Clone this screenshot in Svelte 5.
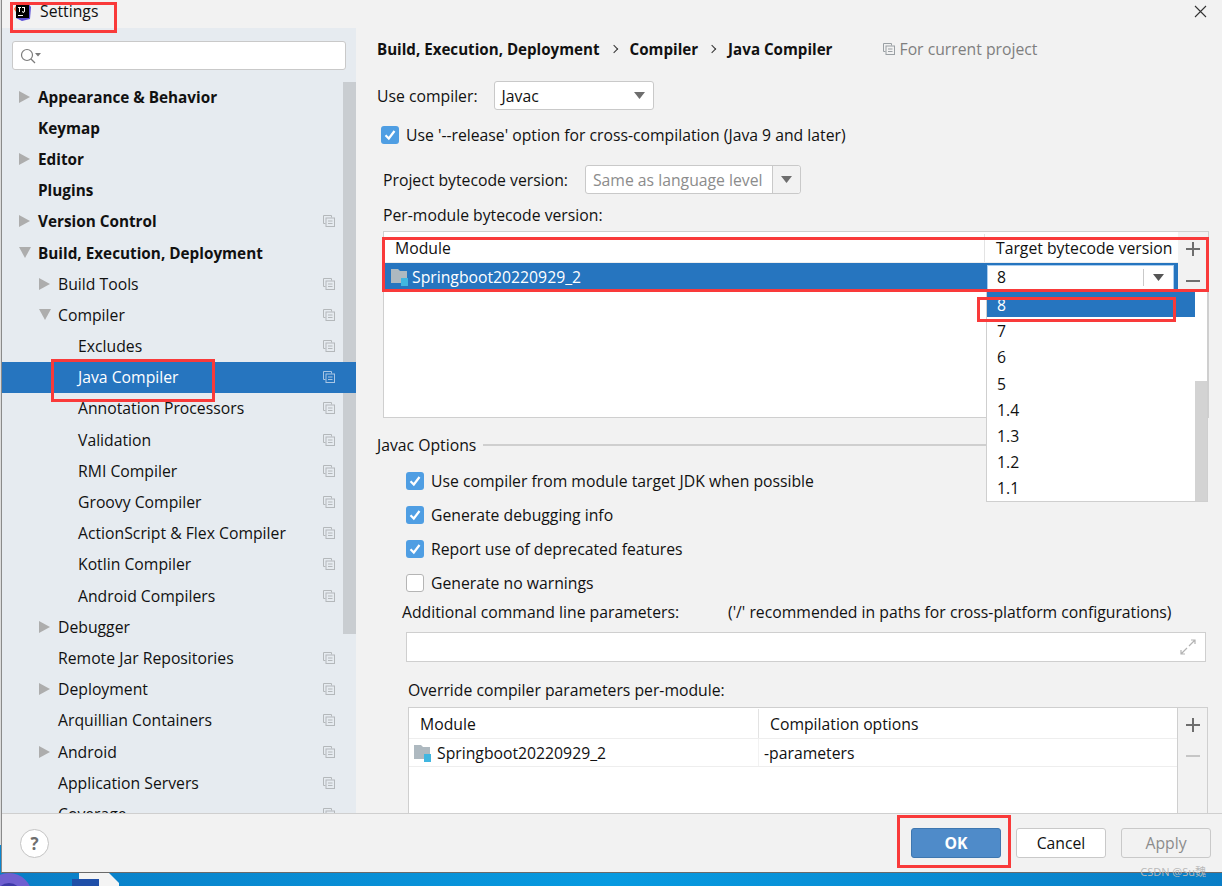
<script>
  const nav = [
    { label: "Appearance & Behavior", level: 0, bold: true, arrow: "right" },
    { label: "Keymap", level: 0, bold: true },
    { label: "Editor", level: 0, bold: true, arrow: "right" },
    { label: "Plugins", level: 0, bold: true },
    { label: "Version Control", level: 0, bold: true, arrow: "right", copy: true },
    { label: "Build, Execution, Deployment", level: 0, bold: true, arrow: "down" },
    { label: "Build Tools", level: 1, arrow: "right", copy: true },
    { label: "Compiler", level: 1, arrow: "down", copy: true },
    { label: "Excludes", level: 2, copy: true },
    { label: "Java Compiler", level: 2, copy: true, active: true },
    { label: "Annotation Processors", level: 2, copy: true },
    { label: "Validation", level: 2, copy: true },
    { label: "RMI Compiler", level: 2, copy: true },
    { label: "Groovy Compiler", level: 2, copy: true },
    { label: "ActionScript & Flex Compiler", level: 2, copy: true },
    { label: "Kotlin Compiler", level: 2, copy: true },
    { label: "Android Compilers", level: 2, copy: true },
    { label: "Debugger", level: 1, arrow: "right" },
    { label: "Remote Jar Repositories", level: 1, copy: true },
    { label: "Deployment", level: 1, arrow: "right", copy: true },
    { label: "Arquillian Containers", level: 1, copy: true },
    { label: "Android", level: 1, arrow: "right", copy: true },
    { label: "Application Servers", level: 1, copy: true },
    { label: "Coverage", level: 1, copy: true }
  ]

  const versions = ["8", "7", "6", "5", "1.4", "1.3", "1.2", "1.1"]

  const javacOptions = [
    { label: "Use compiler from module target JDK when possible", checked: true },
    { label: "Generate debugging info", checked: true },
    { label: "Report use of deprecated features", checked: true },
    { label: "Generate no warnings", checked: false }
  ]
</script>

{#snippet copyIcon(color)}
  <svg class="copy" width="12" height="12" viewBox="0 0 12 12" fill="none" stroke={color}>
    <path d="M2.500 8.500h-2v-8h8v2" />
    <rect x="3" y="3" width="8.500" height="8.500" />
    <path d="M5 6h4.500M5 8.500h4.500" />
  </svg>
{/snippet}

{#snippet moduleIcon()}
  <svg class="module" width="20" height="20" viewBox="0 0 20 20">
    <path d="M1 2h7l2 2h7v12H1z" fill="#aeb9c0" />
    <rect x="11" y="11" width="7" height="8" fill="#40b6e0" />
  </svg>
{/snippet}

{#snippet check(checked)}
  <span class="check" class:off={!checked}>
    {#if checked}
      <svg width="18" height="18" viewBox="0 0 18 18" fill="none" stroke="#fff" stroke-width="2.200">
        <path d="M4.500 9.200 7.800 12.500 13.500 5" />
      </svg>
    {/if}
  </span>
{/snippet}

{#snippet caret(color)}
  <svg width="11" height="7" viewBox="0 0 11 7"><path d="M0 0h11L5.500 7z" fill={color} /></svg>
{/snippet}

{#snippet plusMinus(minusColor)}
  <svg width="14" height="14" viewBox="0 0 14 14"><path d="M6 0h2v6h6v2H8v6H6V8H0V6h6z" fill="#6e6e6e" /></svg>
  <svg class="minus" width="14" height="14" viewBox="0 0 14 14"><rect y="6" width="14" height="2" fill={minusColor} /></svg>
{/snippet}

<div class="screen">
  <div class="dialog">
    <header class="titlebar">
      <svg class="logo" width="18" height="18" viewBox="0 0 18 18">
        <path d="M2 0h12l3 4-1 12-8 2-6-3z" fill="#5b4fd6" />
        <path d="M0 6l3-5 4 2-3 9z" fill="#f2663a" />
        <rect x="2" y="2" width="13" height="13" fill="#000" />
        <rect x="4" y="12" width="5" height="1" fill="#fff" />
        <path d="M4 4h3v1H6v4H5V5H4zM8 4h3v4.500L9.500 10 8 9V8l1.500.8.500-.5V5H8z" fill="#fff" />
      </svg>
      <span class="title">Settings</span>
      <svg class="close" width="13" height="13" viewBox="0 0 13 13" stroke="#333" stroke-width="1.100">
        <path d="M1 1l11 11M12 1 1 12" />
      </svg>
    </header>

    <div class="body">
      <aside class="sidebar">
        <div class="search">
          <svg width="24" height="18" viewBox="0 0 24 18" fill="none" stroke="#7b7b7b" stroke-width="1.200">
            <circle cx="8" cy="8" r="5.500" />
            <path d="M12 12l4 4" />
            <path d="M16 6h6l-3 3.500z" fill="#7b7b7b" stroke="none" />
          </svg>
        </div>
        <nav class="tree">
          {#each nav as item}
            <div class="row level-{item.level}" class:bold={item.bold} class:active={item.active}>
              {#if item.arrow}
                <span class="arrow {item.arrow}"></span>
              {/if}
              <span class="label">{item.label}</span>
              {#if item.copy}
                {@render copyIcon(item.active ? "#a9c6e4" : "#b4b8bb")}
              {/if}
            </div>
          {/each}
        </nav>
        <div class="scrollbar"></div>
      </aside>

      <main class="content">
        <div class="crumbs">
          <b>Build, Execution, Deployment</b>
          <span class="sep"></span>
          <b>Compiler</b>
          <span class="sep"></span>
          <b>Java Compiler</b>
          <span class="scope">
            {@render copyIcon("#9aa0a4")}
            For current project
          </span>
        </div>

        <div class="compiler-row">
          <span>Use compiler:</span>
          <div class="combo compiler-combo">
            <span>Javac</span>
            {@render caret("#6e6e6e")}
          </div>
        </div>

        <div class="release-row">
          {@render check(true)}
          <span>Use '--release' option for cross-compilation (Java 9 and later)</span>
        </div>

        <div class="bytecode-row">
          <span>Project bytecode version:</span>
          <div class="combo bytecode-combo">
            <span class="placeholder">Same as language level</span>
            <span class="combo-btn">{@render caret("#6e6e6e")}</span>
          </div>
        </div>

        <div class="per-module">Per-module bytecode version:</div>

        <div class="table-wrap first">
          <div class="table">
            <div class="thead">
              <span class="cell-module">Module</span>
              <span class="cell-target">Target bytecode version</span>
            </div>
            <div class="selected-row">
              <span class="cell-module">
                {@render moduleIcon()}
                Springboot20220929_2
              </span>
              <div class="cell-combo">
                <span>8</span>
                <span class="cell-combo-btn">{@render caret("#555")}</span>
              </div>
            </div>
          </div>
          <div class="tools">{@render plusMinus("#6e6e6e")}</div>

          <div class="popup">
            <ul>
              {#each versions as v, i}
                <li class:picked={i === 0}>{v}</li>
              {/each}
            </ul>
            <div class="popup-scroll"><div class="popup-thumb"></div></div>
          </div>
        </div>

        <div class="group-title">
          <span>Javac Options</span>
          <span class="rule"></span>
        </div>

        <div class="options">
          {#each javacOptions as opt}
            <div class="option">
              {@render check(opt.checked)}
              <span>{opt.label}</span>
            </div>
          {/each}
        </div>

        <div class="params-labels">
          <span class="params-label">Additional command line parameters:</span>
          <span>('/' recommended in paths for cross-platform configurations)</span>
        </div>

        <div class="params-input">
          <svg width="16" height="16" viewBox="0 0 16 16" fill="none" stroke="#b3b3b3" stroke-width="1.200">
            <path d="M9 7l6-6M11 1h4v4M7 9l-6 6M1 11v4h4" />
          </svg>
        </div>

        <div class="override-label">Override compiler parameters per-module:</div>

        <div class="table-wrap second">
          <div class="table">
            <div class="thead">
              <span class="col-a">Module</span>
              <span class="col-b">Compilation options</span>
            </div>
            <div class="tr">
              <span class="col-a">
                {@render moduleIcon()}
                Springboot20220929_2
              </span>
              <span class="col-b">-parameters</span>
            </div>
          </div>
          <div class="tools">{@render plusMinus("#c6c6c6")}</div>
        </div>
      </main>
    </div>

    <footer class="footer">
      <span class="help">?</span>
      <div class="buttons">
        <button class="primary">OK</button>
        <button>Cancel</button>
        <button class="disabled">Apply</button>
      </div>
    </footer>
  </div>

  <div class="taskbar">
    <span class="start"></span>
    <span class="doc"><span class="doc-badge"></span></span>
  </div>

  <!-- red boxes somebody drew over the screenshot -->
  <span class="mark mark-title"></span>
  <span class="mark mark-java"></span>
  <span class="mark mark-row"></span>
  <span class="mark mark-eight"></span>
  <span class="mark mark-ok"></span>
  <span class="watermark">CSDN @Su魏</span>
</div>

<style>
  :global(body) {
    margin: 0;
  }

  .screen {
    position: relative;
    width: 1222px;
    height: 886px;
    overflow: hidden;
    display: flex;
    flex-direction: column;
    font-family: "Open Sans", "Noto Sans CJK SC", sans-serif;
    font-size: 15.750px;
    color: #111;
    background: linear-gradient(180deg, #dcdcdc 845px, #0a86cf 845px);
  }

  b {
    font-weight: 700;
    font-size: 15.150px;
  }

  .bold {
    font-weight: 700;
    font-size: 15.300px;
  }

  .dialog {
    height: 873px;
    flex: none;
    display: flex;
    flex-direction: column;
    background: #f2f2f2;
    border-left: 1px solid #8a8a8a;
    margin-left: 1px;
    box-sizing: border-box;
    border-bottom: 1px solid #6a6a6a;
  }

  .titlebar {
    height: 28px;
    flex: none;
    display: flex;
    align-items: center;
    position: relative;
    padding-left: 12px;
  }

  .logo {
    margin-top: -4px;
  }

  .title {
    margin-left: 8px;
    margin-top: -6px;
  }

  .close {
    margin-left: auto;
    margin-right: 15px;
    margin-top: -5px;
  }

  .body {
    flex: 1;
    min-height: 0;
    display: flex;
  }

  .sidebar {
    position: relative;
    width: 354px;
    flex: none;
    background: #e6ebf0;
    overflow: hidden;
  }

  .search {
    margin: 13px 10px 0 10px;
    height: 29px;
    box-sizing: border-box;
    background: #fff;
    border: 1px solid #c9c9c9;
    border-radius: 3px;
    display: flex;
    align-items: center;
    padding-left: 6px;
  }

  .tree {
    margin-top: 11px;
  }

  .row {
    position: relative;
    height: 31.200px;
    display: flex;
    align-items: center;
    white-space: nowrap;
  }

  .level-0 { padding-left: 36px; }
  .level-1 { padding-left: 56px; }
  .level-2 { padding-left: 76px; }

  .active {
    background: #2675bf;
    color: #fff;
    z-index: 1;
  }

  .arrow {
    position: absolute;
    width: 0;
    height: 0;
  }

  .level-0 .arrow { left: 17px; }
  .level-1 .arrow { left: 37px; }

  .arrow.right {
    border-left: 11px solid #adadad;
    border-top: 6px solid transparent;
    border-bottom: 6px solid transparent;
  }

  .arrow.down {
    border-top: 11px solid #adadad;
    border-left: 6px solid transparent;
    border-right: 6px solid transparent;
  }

  .row .copy {
    position: absolute;
    left: 321px;
  }

  .scrollbar {
    position: absolute;
    right: 0;
    top: 54px;
    width: 13px;
    height: 552px;
    background: #c9cdd1;
  }

  .content {
    flex: 1;
    min-width: 0;
    padding: 0 0 0 21px;
    overflow: hidden;
  }

  .crumbs {
    height: 24px;
    margin-top: 9px;
    display: flex;
    align-items: center;
    white-space: nowrap;
  }

  .sep {
    width: 5px;
    height: 5px;
    border-top: 1px solid #333;
    border-right: 1px solid #333;
    transform: rotate(45deg);
    margin: 0 13px 0 11px;
  }

  .scope {
    display: flex;
    align-items: center;
    gap: 5px;
    margin-left: 50px;
    color: #7f7f7f;
  }

  .compiler-row {
    display: flex;
    align-items: center;
    margin-top: 20px;
    gap: 16px;
  }

  .combo {
    box-sizing: border-box;
    height: 29px;
    background: #fff;
    border: 1px solid #c9c9c9;
    border-radius: 3px;
    display: flex;
    align-items: center;
  }

  .compiler-combo {
    width: 160px;
    justify-content: space-between;
    padding: 0 8px 0 7px;
  }

  .release-row {
    display: flex;
    align-items: center;
    gap: 7px;
    margin: 11px 0 0 4px;
    height: 28px;
  }

  .check {
    width: 18px;
    height: 18px;
    flex: none;
    display: block;
    background: #4f9ee3;
    border-radius: 3px;
  }

  .check svg {
    display: block;
  }

  .check.off {
    box-sizing: border-box;
    background: #fff;
    border: 1px solid #b5b5b5;
  }

  .bytecode-row {
    display: flex;
    align-items: center;
    margin: 16px 0 0 6px;
    gap: 17px;
  }

  .bytecode-combo {
    width: 216px;
    padding-left: 7px;
    justify-content: space-between;
    background: #fff;
  }

  .placeholder {
    color: #8c8c8c;
  }

  .combo-btn {
    width: 27px;
    height: 100%;
    background: #f2f2f2;
    border-left: 1px solid #c9c9c9;
    display: flex;
    align-items: center;
    justify-content: center;
    border-radius: 0 3px 3px 0;
  }

  .per-module {
    margin: 10px 0 0 6px;
    height: 22px;
    line-height: 22px;
  }

  .table-wrap {
    position: relative;
    display: flex;
  }

  .table-wrap.first {
    margin: 5px 0 0 6px;
    width: 826px;
    height: 187px;
    box-sizing: border-box;
    border: 1px solid #cfcfcf;
  }

  .table {
    flex: 1;
    min-width: 0;
    background: #fff;
  }

  .tools {
    width: 30px;
    flex: none;
    display: flex;
    flex-direction: column;
    align-items: center;
    padding-top: 10px;
    box-sizing: border-box;
  }

  .minus {
    margin-top: 18px;
  }

  .thead {
    display: flex;
    height: 31px;
    padding-top: 1px;
    align-items: center;
    border-bottom: 1px solid #eeeeee;
    box-sizing: border-box;
  }

  .first .thead {
    padding-top: 2px;
  }

  .cell-module {
    display: flex;
    align-items: center;
    width: 600px;
    flex: none;
    box-sizing: border-box;
    padding-left: 11px;
  }

  .cell-target {
    padding-left: 11px;
    border-left: 1px solid #e3e3e3;
    height: 100%;
    display: flex;
    align-items: center;
    white-space: nowrap;
  }

  .selected-row {
    height: 28px;
    display: flex;
    align-items: center;
    background: #2675bf;
    color: #fff;
  }

  .selected-row .cell-module {
    padding-left: 6px;
  }

  .module {
    flex: none;
    margin-right: 2px;
  }

  .cell-combo {
    margin-left: 3px;
    width: 187px;
    height: 25px;
    box-sizing: border-box;
    background: #fff;
    border: 1px solid #a9cdf0;
    color: #111;
    display: flex;
    align-items: center;
    justify-content: space-between;
    padding-left: 9px;
  }

  .cell-combo-btn {
    width: 29px;
    height: 17px;
    border-left: 1px solid #c9c9c9;
    display: flex;
    align-items: center;
    justify-content: center;
  }

  .popup {
    position: absolute;
    left: 602px;
    top: 59px;
    width: 222px;
    height: 211px;
    box-sizing: border-box;
    background: #fff;
    border: 1px solid #cfcfcf;
    border-top: none;
    display: flex;
    z-index: 2;
  }

  .popup ul {
    flex: 1;
    margin: 0;
    padding: 0;
    list-style: none;
  }

  .popup li {
    height: 26.200px;
    line-height: 28px;
    padding-left: 10px;
  }

  .popup li.picked {
    background: #2675bf;
    color: #fff;
  }

  .popup-scroll {
    width: 12px;
    flex: none;
    display: flex;
    align-items: flex-end;
  }

  .popup-thumb {
    width: 100%;
    height: 120px;
    background: #d3d3d3;
  }

  .group-title {
    display: flex;
    align-items: center;
    margin-top: 16px;
    height: 22px;
    gap: 7px;
  }

  .rule {
    width: 520px;
    height: 2px;
    background: #cfcfcf;
  }

  .options {
    margin: 11px 0 0 29px;
    display: flex;
    flex-direction: column;
    gap: 6px;
  }

  .option {
    height: 28px;
    display: flex;
    align-items: center;
    gap: 7px;
  }

  .params-labels {
    display: flex;
    margin: 3px 0 0 25px;
    height: 24px;
    align-items: center;
    white-space: nowrap;
  }

  .params-label {
    width: 326px;
    flex: none;
  }

  .params-input {
    margin: 8px 0 0 29px;
    width: 800px;
    height: 30px;
    box-sizing: border-box;
    background: #fff;
    border: 1px solid #cfcfcf;
    display: flex;
    align-items: center;
    justify-content: flex-end;
    padding-right: 9px;
  }

  .override-label {
    margin: 17px 0 0 31px;
    height: 22px;
    line-height: 22px;
  }

  .table-wrap.second {
    margin: 6px 0 0 31px;
    width: 800px;
    height: 120px;
    border: 1px solid #cfcfcf;
    box-sizing: border-box;
  }

  .second .tools {
    padding-top: 10px;
    background: #f2f2f2;
    border-left: 1px solid #cfcfcf;
  }

  .second .minus {
    margin-top: 17px;
  }

  .second .col-a {
    width: 350px;
    flex: none;
    box-sizing: border-box;
    padding-left: 11px;
    display: flex;
    align-items: center;
    height: 100%;
    border-right: 1px solid #e3e3e3;
  }

  .second .col-b {
    padding-left: 11px;
  }

  .tr {
    height: 28px;
    display: flex;
    align-items: center;
    border-bottom: 1px solid #eeeeee;
    box-sizing: border-box;
  }

  .tr .col-a {
    padding-left: 4px;
    border-right-color: #f2f2f2;
  }

  .tr .module {
    margin-right: 4px;
  }

  .tr .col-b {
    padding-left: 5px;
  }

  .footer {
    height: 59px;
    flex: none;
    box-sizing: border-box;
    border-top: 1px solid #cfcfcf;
    display: flex;
    align-items: center;
    justify-content: space-between;
    padding: 0 11px 0 18px;
    position: relative;
  }

  .help {
    width: 29px;
    height: 29px;
    box-sizing: border-box;
    border-radius: 50%;
    background: #fff;
    border: 1px solid #c4c4c4;
    display: flex;
    align-items: center;
    justify-content: center;
    font-weight: 700;
    font-size: 17px;
    color: #6e6e6e;
  }

  .buttons {
    display: flex;
    gap: 15px;
  }

  button {
    width: 90px;
    height: 30px;
    box-sizing: border-box;
    padding: 0;
    background: #fff;
    border: 1px solid #c9c9c9;
    border-radius: 3px;
    font: inherit;
    color: #111;
  }

  button.primary {
    background: #4f8bc9;
    border-color: #3f77b0;
    color: #fff;
    font-weight: 700;
  }

  button.disabled {
    background: #f2f2f2;
    color: #8c8c8c;
  }

  .taskbar {
    flex: 1;
    position: relative;
    background: linear-gradient(90deg, #0a7ec6, #079ae0 50%, #0a7ec6);
    overflow: hidden;
  }

  .start {
    position: absolute;
    left: -14px;
    top: 0;
    width: 46px;
    height: 46px;
    box-sizing: border-box;
    border-radius: 50%;
    border: 10px solid #6f5fd0;
    background: #3d3aa8;
  }

  .doc {
    position: absolute;
    left: 72px;
    top: 0;
    width: 47px;
    height: 20px;
    background: linear-gradient(90deg, transparent 7px, #f4f4f4 7px);
    clip-path: polygon(0 0, 37px 0, 47px 10px, 47px 100%, 0 100%);
  }

  .doc-badge {
    position: absolute;
    left: 0;
    top: 6px;
    width: 27px;
    height: 14px;
    background: #1f4fa8;
  }

  .mark {
    position: absolute;
    box-sizing: border-box;
    border: 3px solid #f93a3a;
    pointer-events: none;
    z-index: 5;
  }

  .mark-title { left: 10px; top: 2px; width: 107px; height: 31px; }
  .mark-java { left: 51px; top: 359px; width: 164px; height: 43px; }
  .mark-row { left: 382px; top: 237px; width: 827px; height: 55px; }
  .mark-eight { left: 977px; top: 297px; width: 199px; height: 25px; }
  .mark-ok { left: 897px; top: 815px; width: 114px; height: 53px; }

  .watermark {
    position: absolute;
    right: 16px;
    top: 863px;
    font-size: 11px;
    color: #b9b9b9;
    z-index: 5;
  }
</style>
